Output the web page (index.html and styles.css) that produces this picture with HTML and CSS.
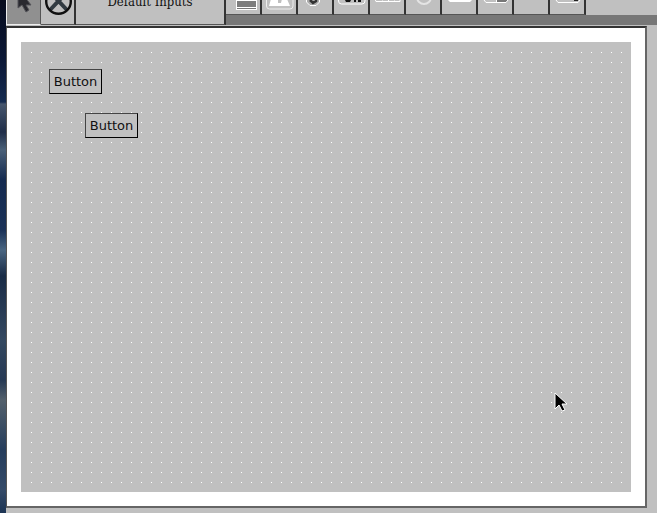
FILE: index.html
```html
<!DOCTYPE html>
<html lang="en">
<head>
<meta charset="utf-8">
<title>Interface Builder</title>
<link rel="stylesheet" href="styles.css">
</head>
<body>
<div class="wallpaper"></div>
<div class="app">
  <header class="toolbar">
    <button class="tool tool-select" aria-label="Select"><svg width="34" height="44" viewBox="0 -20 34 44"><path d="M11 -12V8L15 5L19 12L22 10L19 5H24Z" fill="#29292f" stroke="#55555a" stroke-width="1"/></svg></button>
    <button class="tool tool-close" aria-label="Cancel"><svg width="34" height="44" viewBox="0 -20 34 44"><path d="M9 -8L26 10M26 -8L9 10" stroke="#323b42" stroke-width="4"/><circle cx="17.5" cy="1.5" r="12.3" fill="none" stroke="#111" stroke-width="2.4"/></svg></button>
    <button class="tool tool-inputs">Default Inputs</button>
    <div class="palette">
      <button class="item" aria-label="List"><svg width="34" height="14" viewBox="0 0 34 14"><path d="M10 0H31V10H10Z" fill="#fff"/><path d="M11 1H30V8H11Z" fill="#7d7d7d"/><path d="M11 8H30V9H11Z" fill="#777"/><path d="M11 7H30V8H11Z" fill="#fff"/></svg></button>
      <button class="item" aria-label="Image"><svg width="34" height="14" viewBox="0 0 34 14"><path d="M4.500 -5V6Q4.500 9 7.500 9H28Q31 9 31 6V-5" fill="none" stroke="#eee"/><path d="M9 -1L7 6H28L25 -1H20L19 3H16V-1Z" fill="#fff"/></svg></button>
      <button class="item" aria-label="Knob"><svg width="34" height="14" viewBox="0 0 34 14"><path d="M8.500 -2V2L12 5.500H18L21.500 2V-2" fill="#aaa" stroke="#fff"/><path d="M12 0L15 3L18 1V-2" fill="none" stroke="#333" stroke-width="2.500"/></svg></button>
      <button class="item" aria-label="On button"><svg width="34" height="14" viewBox="0 0 34 14"><path d="M4.500 -3V1Q4.500 4 7.500 4H28Q31 4 31 1V-3" fill="none" stroke="#fff"/><path d="M11 0H17L16 2H12ZM20 0H22V2H20ZM24 0H27V2H24Z" fill="#111"/></svg></button>
      <button class="item" aria-label="Table"><svg width="34" height="14" viewBox="0 0 34 14"><path d="M5 -1L6 1.500H30V-1M18.500 -2V1" fill="none" stroke="#fff"/><path d="M12.500 -1V1M24.500 -1V1" stroke="#ddd"/></svg></button>
      <button class="item" aria-label="Dial"><svg width="34" height="14" viewBox="0 0 34 14"><circle cx="18" cy="-3" r="7" fill="none" stroke="#e4e4e4" stroke-width="2"/></svg></button>
      <button class="item" aria-label="Panel"><svg width="34" height="14" viewBox="0 0 34 14"><path d="M6 0H30L28 2H8Z" fill="#fff"/></svg></button>
      <button class="item" aria-label="Split"><svg width="34" height="14" viewBox="0 0 34 14"><path d="M18 0H30L28 2H18Z" fill="#777"/><path d="M6 0L8 2.500H28L30 0M18.500 -1V2" fill="none" stroke="#fff"/></svg></button>
      <button class="item" aria-label="Blank"></button>
      <button class="item" aria-label="Drop-down"><svg width="34" height="14" viewBox="0 0 34 14"><path d="M6 0L8 2.500H28L30 0" fill="none" stroke="#fff"/><path d="M24 0H28V1H24Z" fill="#222"/></svg></button>
    </div>
  </header>
  <main class="window">
    <div class="canvas">
      <button class="widget widget-a">Button</button>
      <button class="widget widget-b">Button</button>
      <svg class="pointer" width="14" height="21" viewBox="0 0 14 21"><path d="M1 1V17L5 13L8 19L11 18L8 12H13Z" fill="#000" stroke="#fff"/></svg>
    </div>
  </main>
</div>
</body>
</html>
```
FILE: styles.css
```css
* { box-sizing: border-box; }
body {
  margin: 0;
  height: 100vh;
  display: flex;
  overflow: hidden;
  background: #c0c0c0;
}
button {
  margin: 0;
  padding: 0;
  border: 0;
  background: #c0c0c0;
  color: #111;
}
svg { display: block; }
.wallpaper {
  flex: 0 0 6px;
  background: linear-gradient(#080d1e 0, #0b1736 60px, #152b50 102px, #46566d 104px, #202e49 132px, #4a6078 150px, #142a50 180px, #1a3157 230px, #496581 250px, #192b46 276px, #344860 340px, #263954 380px, #53606c 400px, #253d5c 450px, #344a68 490px, #1c3454 100%);
}
.app {
  flex: 1;
  min-width: 0;
  display: flex;
  flex-direction: column;
}
.toolbar {
  flex: 0 0 26px;
  display: flex;
  align-items: flex-start;
  background: #777;
  border-bottom: 1px solid #c0c0c0;
}
/* The tool row is scrolled partly above the top edge. */
.tool {
  flex: none;
  height: 45px;
  margin-top: -20px;
  overflow: hidden;
  border-right: 2px solid #333;
  border-bottom: 1px solid #555;
}
.tool-select {
  width: 35px;
  background: #909090;
  border-left: 1px solid #eee;
  border-right: 1px solid #555;
  border-bottom: 1px solid #eee;
}
.tool-close { width: 35px; }
.tool-inputs {
  width: 150px;
  font: 13px/18px "DejaVu Serif Condensed", "DejaVu Serif", serif;
}
.palette {
  flex: 1;
  display: flex;
  height: 15px;
  background: #c0c0c0;
}
.item {
  width: 36px;
  height: 15px;
  overflow: hidden;
  border-right: 2px solid #333;
  border-bottom: 1px solid #555;
}
.window {
  flex: 1;
  display: flex;
  margin: 0 10px 5px 0;
  padding: 14px;
  background: #fff;
  border: 1px solid #555;
  border-top: 2px solid #333;
  border-right: 2px solid #666;
  border-bottom: 2px solid #666;
}
.canvas {
  flex: 1;
  position: relative;
  background: #c0c0c0;
}
.canvas::before {
  content: "";
  position: absolute;
  inset: 10px 0 0 10px;
  background: conic-gradient(from 270deg at 1px 1px, #fff 90deg, transparent 0) 0 0 / 10px 10px;
}
.widget {
  position: absolute;
  width: 53px;
  height: 25px;
  border: 1px solid #000;
  border-top-color: #444;
  border-left-color: #444;
  font: 13px/21px "DejaVu Sans", sans-serif;
}
.widget-a { left: 28px; top: 27px; }
.widget-b { left: 64px; top: 71px; }
.pointer { position: absolute; left: 533px; top: 350px; }
```
